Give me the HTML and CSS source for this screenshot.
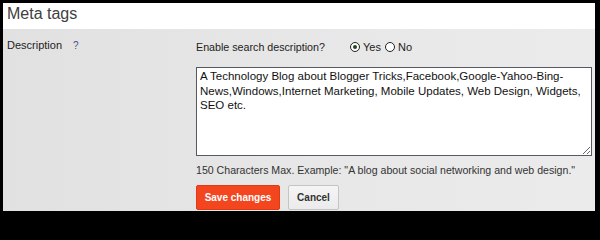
FILE: index.html
```html
<!DOCTYPE html>
<html>
<head>
<meta charset="utf-8">
<link rel="stylesheet" href="styles.css">
</head>
<body>
<div class="frame">
  <div class="header">Meta tags</div>
  <div class="panel">
    <div class="label">Description <span class="help">?</span></div>
    <div class="content">
      <div class="enable">
        <span class="question">Enable search description?</span>
        <span class="radio checked"></span><span class="opt">Yes</span>
        <span class="radio"></span><span class="opt">No</span>
      </div>
      <textarea class="desc">A Technology Blog about Blogger Tricks,Facebook,Google-Yahoo-Bing-News,Windows,Internet Marketing, Mobile Updates, Web Design, Widgets, SEO etc.</textarea>
      <div class="hint">150 Characters Max. Example: "A blog about social networking and web design."</div>
      <div class="buttons">
        <button class="btn save">Save changes</button>
        <button class="btn cancel">Cancel</button>
      </div>
    </div>
  </div>
</div>
</body>
</html>
```
FILE: styles.css
```css
html, body {
  margin: 0;
  padding: 0;
  background: #000;
}
body {
  padding: 3px 5px 6px 3px;
  font-family: "Liberation Sans", Arial, sans-serif;
}
.frame {
  width: 592px;
  height: 208px;
  display: flex;
  flex-direction: column;
  overflow: hidden;
}
.header {
  flex: none;
  background: #fff;
  height: 26px;
  box-sizing: border-box;
  padding: 1px 0 0 4px;
  font-family: "Liberation Sans", Arial, sans-serif;
  font-size: 16px;
  line-height: 20px;
  color: #404040;
}
.panel {
  flex: 1;
  background: linear-gradient(90deg, #e1e1e1 0%, #e8e8e8 60%, #ebebeb 100%);
  display: flex;
  padding-left: 4px;
}
.label {
  flex: none;
  width: 189px;
  font-size: 11px;
  line-height: 13px;
  color: #222;
  padding-top: 10px;
}
.help {
  color: #4d4f8f;
  font-size: 10px;
  margin-left: 8px;
}
.content {
  flex: none;
  width: 396px;
  display: flex;
  flex-direction: column;
}
.enable {
  display: flex;
  align-items: center;
  height: 17px;
  margin-top: 9px;
  font-size: 10.7px;
  color: #222;
}
.question {
  flex: none;
  width: 154px;
}
.radio {
  flex: none;
  width: 8px;
  height: 8px;
  border: 1.5px solid #222;
  border-radius: 50%;
  background: #fff;
  position: relative;
  margin-right: 3px;
}
.radio.checked::after {
  content: "";
  position: absolute;
  left: 2px;
  top: 2px;
  width: 4px;
  height: 4px;
  border-radius: 50%;
  background: #1f4a1f;
}
.opt {
  font-size: 11px;
  margin-right: 4px;
  color: #222;
}
.desc {
  display: block;
  margin: 12px 0 0 0;
  width: 396px;
  height: 89px;
  box-sizing: border-box;
  border: 1px solid #555a60;
  background: #fff;
  padding: 1px 3px;
  font-family: "Liberation Sans", Arial, sans-serif;
  font-size: 11.5px;
  line-height: 14.5px;
  color: #111;
  resize: both;
  outline: none;
}
.hint {
  margin-top: 8px;
  font-size: 10.6px;
  color: #333;
  height: 13px;
  line-height: 13px;
  white-space: nowrap;
}
.buttons {
  display: flex;
  gap: 8px;
  margin-top: 8px;
}
.btn {
  height: 25px;
  border-radius: 2px;
  font-family: "Liberation Sans", Arial, sans-serif;
  font-size: 10px;
  font-weight: bold;
  padding: 0;
}
.save {
  width: 84px;
  background: #f3461f;
  border: 1px solid #e03a15;
  color: #fff;
}
.cancel {
  width: 51px;
  background: linear-gradient(#f5f5f5, #ebebeb);
  border: 1px solid #c4c4c4;
  color: #333;
}
```
